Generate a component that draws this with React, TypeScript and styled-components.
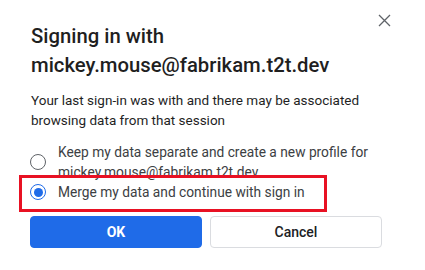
import React from "react";
import styled, { createGlobalStyle } from "styled-components";

const Global = createGlobalStyle`
  html, body { margin: 0; padding: 0; background: #ffffff; }
  body { font-family: Roboto, "Liberation Sans", Arial, sans-serif; }
  * { box-sizing: border-box; }
`;

const Dialog = styled.div`
  position: relative;
  width: 425px;
  height: 270px;
  padding: 22px 43px 0 30px;
  display: flex;
  flex-direction: column;
  background: #ffffff;
`;

const CloseButton = styled.button`
  position: absolute;
  top: 14px;
  right: 34px;
  width: 13px;
  height: 13px;
  padding: 0;
  border: none;
  background: transparent;
  display: flex;
  align-items: center;
  justify-content: center;
`;

const Title = styled.h1`
  margin: 0 0 0 1px;
  font-size: 20.3px;
  line-height: 29px;
  font-weight: 500;
  color: #1f1f1f;
  letter-spacing: 0;
`;

const Body = styled.p`
  margin: 10px 0 0 1px;
  font-size: 13.5px;
  line-height: 20px;
  color: #1f1f1f;
`;

const Options = styled.div`
  margin-top: 12px;
  display: flex;
  flex-direction: column;
`;

const Option = styled.label`
  display: flex;
  align-items: center;
  gap: 12px;
  font-size: 13.75px;
  line-height: 20px;
  color: #3c4043;
`;

const Radio = styled.span<{ $checked?: boolean }>`
  flex: none;
  width: 16px;
  height: 16px;
  border-radius: 50%;
  border: 1.5px solid ${(p) => (p.$checked ? "#1f6be8" : "#5f6368")};
  display: flex;
  align-items: center;
  justify-content: center;
  &::after {
    content: "";
    width: 9px;
    height: 9px;
    border-radius: 50%;
    background: ${(p) => (p.$checked ? "#1f6be8" : "transparent")};
  }
`;

const OptionText = styled.span`
  display: block;
`;

const Buttons = styled.div`
  margin-top: 14px;
  display: flex;
  gap: 8px;
`;

const Button = styled.button<{ $primary?: boolean }>`
  width: 172px;
  height: 32px;
  border-radius: 4px;
  font-family: Roboto, "Liberation Sans", Arial, sans-serif;
  font-size: 14px;
  font-weight: ${(p) => (p.$primary ? 700 : 500)};
  color: ${(p) => (p.$primary ? "#ffffff" : "#202124")};
  background: ${(p) => (p.$primary ? "#1f6be8" : "#ffffff")};
  border: 1px solid ${(p) => (p.$primary ? "#1f6be8" : "#dadce0")};
`;

const Highlight = styled.div`
  position: absolute;
  left: 19px;
  top: 175px;
  width: 308px;
  height: 37px;
  border: 3px solid #e81123;
  pointer-events: none;
`;

export default function App() {
  return (
    <>
      <Global />
      <Dialog>
        <CloseButton aria-label="Close">
          <svg width="13" height="13" viewBox="0 0 13 13">
            <path d="M1 1 L12 12 M12 1 L1 12" stroke="#5f6368" strokeWidth="1.3" fill="none" />
          </svg>
        </CloseButton>
        <Title>
          Signing in with
          <br />
          mickey.mouse@fabrikam.t2t.dev
        </Title>
        <Body>
          Your last sign-in was with and there may be associated browsing data from that session
        </Body>
        <Options>
          <Option>
            <Radio />
            <OptionText>
              Keep my data separate and create a new profile for
              <br />
              mickey.mouse@fabrikam.t2t.dev
            </OptionText>
          </Option>
          <Option>
            <Radio $checked />
            <OptionText>Merge my data and continue with sign in</OptionText>
          </Option>
        </Options>
        <Buttons>
          <Button $primary>OK</Button>
          <Button>Cancel</Button>
        </Buttons>
        <Highlight />
      </Dialog>
    </>
  );
}
